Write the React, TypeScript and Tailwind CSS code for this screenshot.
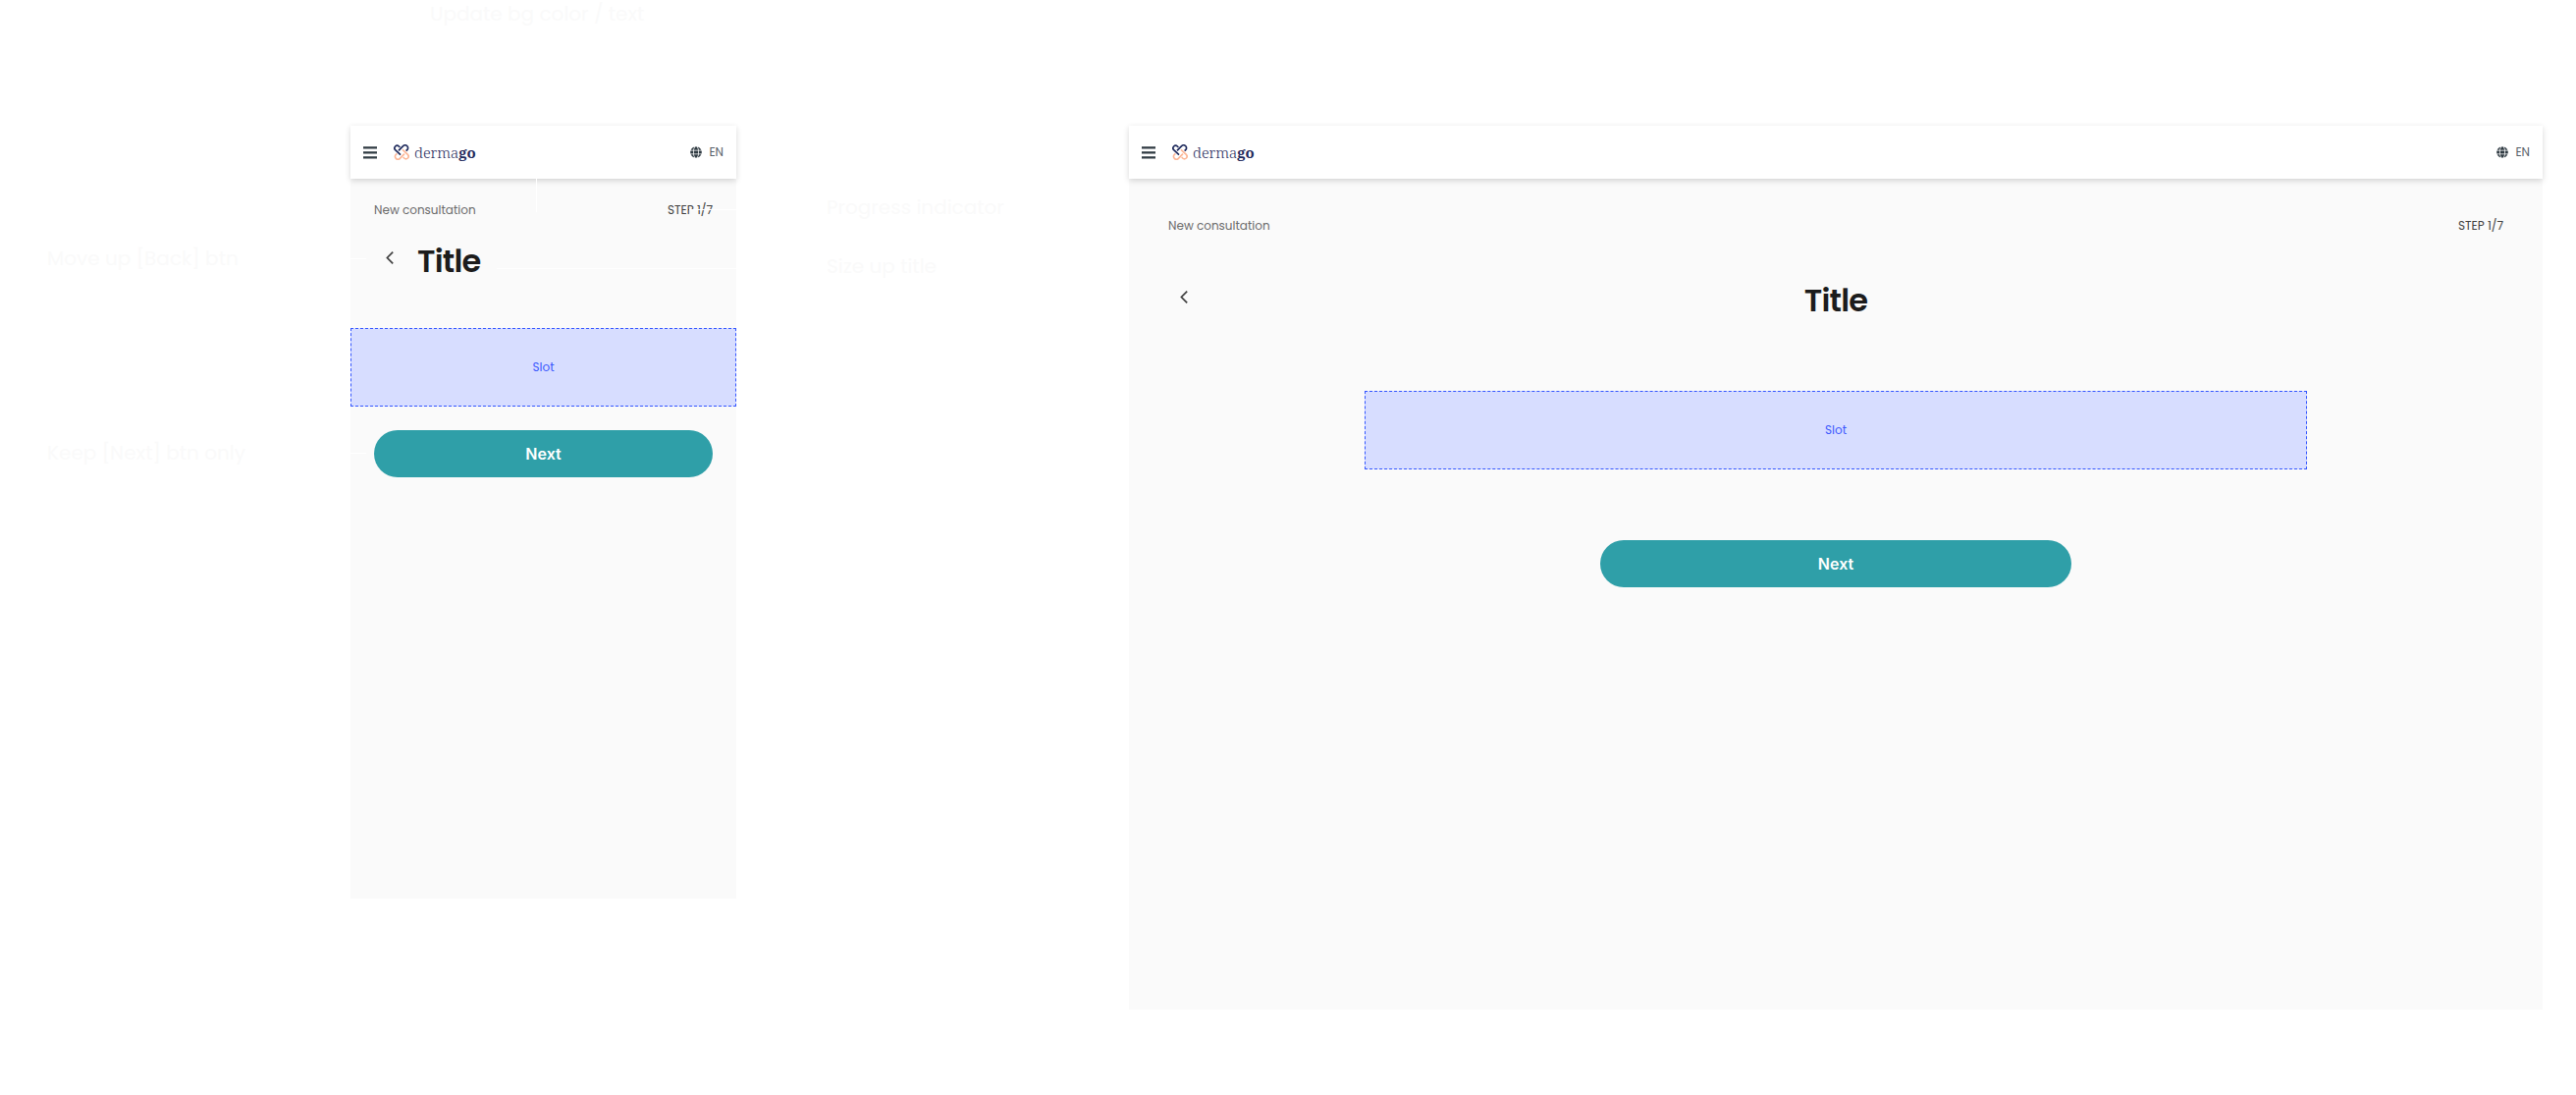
import React from 'react';
import { FaGlobe } from 'react-icons/fa';

function Logo() {
  return (
    <a href="#home" aria-label="dermago" className="flex items-center gap-[5px] text-[#1f2a5c]">
      <svg width="16" height="16" viewBox="0 0 48 48" fill="none" strokeWidth="5" strokeLinejoin="round" aria-hidden="true">
        <path d="M27 16 43 31a8 8 0 0 1 0 11 8 8 0 0 1-11 0l-3-3M33 29 19 43a8 8 0 0 1-12 0 8 8 0 0 1 0-12l3-3" stroke="#fdb797" />
        <path d="M21 32 5 17A8 8 0 0 1 5 6a8 8 0 0 1 11 0l3 3M15 19 29 5a8 8 0 0 1 12 0 8 8 0 0 1 0 12l-3 3" stroke="#1f2a5c" />
      </svg>
      <span className="font-['Noto_Serif','Liberation_Serif',serif] text-[15px] leading-6 font-light">
        derma<b className="font-bold">go</b>
      </span>
    </a>
  );
}

function Header() {
  return (
    <header className="relative flex h-[54px] items-center justify-between bg-white px-[13px] text-[#303b43] shadow-[0_2px_6px_rgba(0,0,0,0.16)]">
      <div className="flex items-center gap-[17px]">
        <button aria-label="Menu" className="w-3.5">
          <svg width="14" height="13" viewBox="0 0 14 13" fill="currentColor" aria-hidden="true">
            <path d="M0 .2h14v2.4H0zM0 5.2h14v2.4H0zM0 10.2h14v2.4H0z" />
          </svg>
        </button>
        <Logo />
      </div>
      <button className="flex items-center gap-[7px] text-xs">
        <FaGlobe size={12} aria-hidden="true" />
        <span className="text-[#58616a]">EN</span>
      </button>
    </header>
  );
}

function BackButton() {
  return (
    <button aria-label="Back" className="flex size-8 items-center justify-center text-[#404040]">
      <svg width="8" height="13" viewBox="0 0 8 13" fill="none" stroke="currentColor" strokeWidth="1.7" aria-hidden="true">
        <path d="M7.2.7 1.4 6.5l5.8 5.8" />
      </svg>
    </button>
  );
}

function Steps() {
  return (
    <div className="flex justify-between text-xs leading-4">
      <span className="text-[#6b6b6b]">New consultation</span>
      <span className="text-[#404040]">STEP 1/7</span>
    </div>
  );
}

function Slot() {
  return (
    <div className="flex h-20 items-center justify-center border border-dashed border-[#3355ff] bg-[#d7ddff] text-xs text-[#3d5afe]">
      Slot
    </div>
  );
}

function NextButton() {
  return (
    <button className="h-12 w-full rounded-full bg-[#2f9fa8] font-['Inter',sans-serif] text-base font-semibold text-white">
      Next
    </button>
  );
}

/* Thin lines that tie the side notes to the parts of the phone screen. */
function NoteLines() {
  return (
    <div aria-hidden="true">
      <span className="absolute top-[54px] left-[189px] h-[34px] w-px bg-white" />
      <span className="absolute top-[85px] right-0 h-px w-12 bg-white" />
      <span className="absolute top-[135px] left-0 h-px w-4 bg-white" />
      <span className="absolute top-[145px] right-0 h-px w-[244px] bg-white" />
      <span className="absolute top-[333px] left-0 h-px w-4 bg-white" />
    </div>
  );
}

const note = 'text-xl leading-6 text-[#fafafa]';

export default function App() {
  return (
    <main className="min-h-screen bg-white pb-20 font-['Poppins','Inter',sans-serif]">
      <p className={note + ' ml-[438px] pt-0.5'}>Update bg color / text</p>
      <div className="mt-[102px] flex items-start pr-[34px]">
        <aside className="w-[357px] shrink-0 pl-12">
          <p className={note + ' mt-[123px]'}>Move up [Back] btn</p>
          <p className={note + ' mt-[174px]'}>Keep [Next] btn only</p>
        </aside>
        <section className="relative min-h-[787px] w-[393px] shrink-0 bg-[#fafafa]">
          <Header />
          <div className="px-6 pt-6">
            <Steps />
            <div className="mt-6 flex items-start">
              <BackButton />
              <h1 className="ml-3 text-[32px] leading-10 font-semibold tracking-tight text-[#1c1c1c]">Title</h1>
            </div>
          </div>
          <div className="mt-12"><Slot /></div>
          <div className="px-6 pt-6"><NextButton /></div>
          <NoteLines />
        </section>
        <aside className="w-[400px] shrink-0 pl-[92px]">
          <p className={note + ' mt-[71px]'}>Progress indicator</p>
          <p className={note + ' mt-9'}>Size up title</p>
        </aside>
        <section className="min-h-[900px] min-w-0 flex-1 bg-[#fafafa]">
          <Header />
          <div className="px-10 pt-10">
            <Steps />
            <div className="mt-12 grid grid-cols-[32px_1fr_32px]">
              <BackButton />
              <h1 className="text-center text-[32px] leading-10 font-semibold tracking-tight text-[#1c1c1c]">Title</h1>
            </div>
          </div>
          <div className="mx-auto mt-[72px] w-2/3"><Slot /></div>
          <div className="mx-auto mt-[72px] w-1/3"><NextButton /></div>
        </section>
      </div>
    </main>
  );
}
